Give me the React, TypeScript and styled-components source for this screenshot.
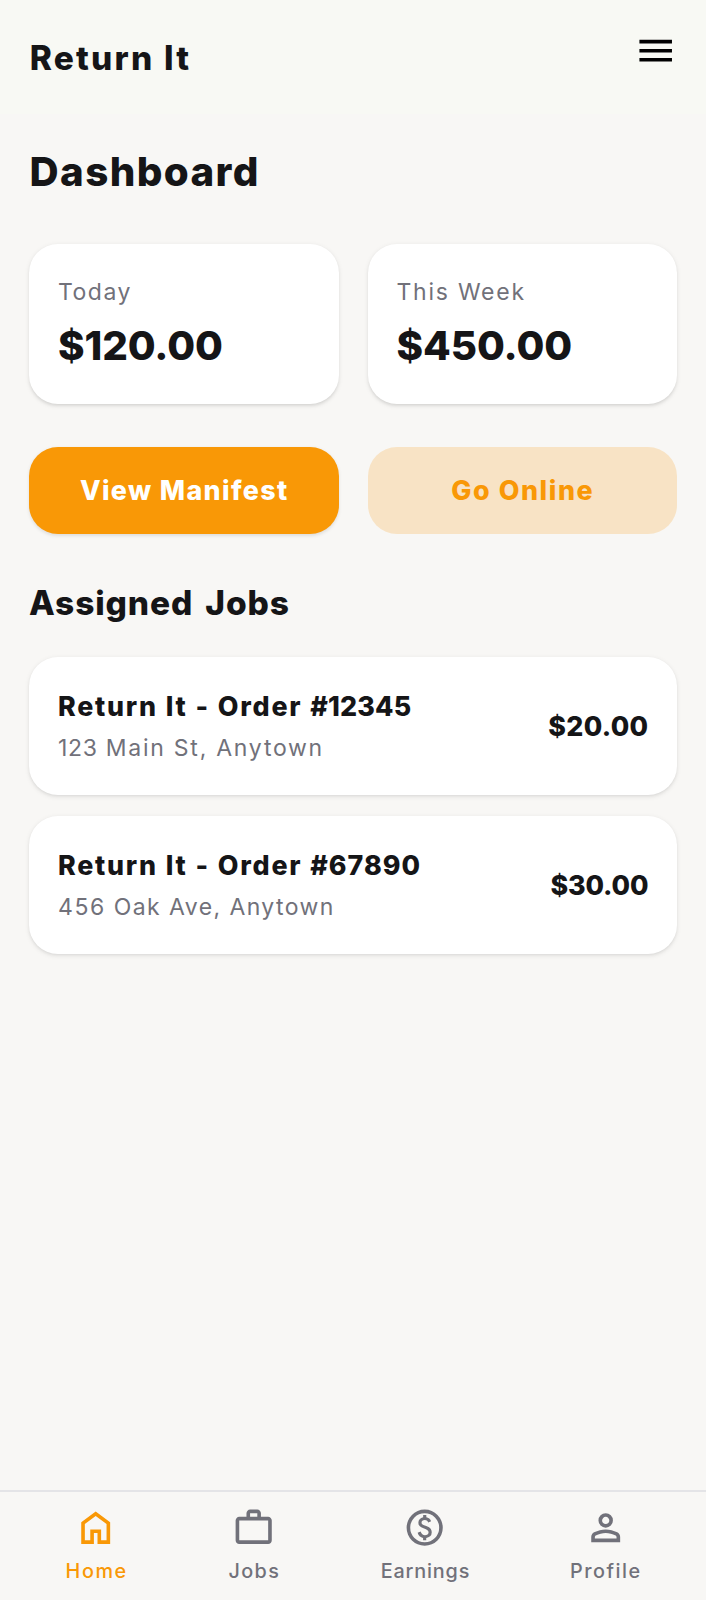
import React from "react";
import styled, { createGlobalStyle } from "styled-components";

const color = {
  page: "#f8f7f5",
  header: "#f8f9f4",
  ink: "#151517",
  muted: "#71717a",
  accent: "#f99806",
  accentSoft: "#f8e3c5",
  line: "#e4e4e7",
};

const GlobalStyle = createGlobalStyle`
  *, *::before, *::after { box-sizing: border-box; }
  body {
    margin: 0;
    background: ${color.page};
    color: ${color.ink};
    font-family: Inter, "Liberation Sans", sans-serif;
  }
  h1, h2, h3, p { margin: 0; }
  button { font: inherit; border: 0; padding: 0; background: none; }
`;

const Screen = styled.div`
  display: flex;
  flex-direction: column;
  width: 706px;
  height: 1600px;
  background: ${color.page};
`;

const Header = styled.header`
  display: flex;
  justify-content: space-between;
  align-items: flex-start;
  height: 114px;
  padding: 29px 29px 0 29.7px;
  background: ${color.header};
`;

const Brand = styled.h1`
  font-size: 33.5px;
  font-weight: 800;
  line-height: 58px;
  letter-spacing: 2.2px;
`;

const MenuButton = styled.button`
  display: flex;
  color: #000;
`;

const Icon = styled.svg`
  display: block;
  width: 43.4px;
  height: 43.4px;
  fill: currentColor;
`;

const Main = styled.main`
  flex: 1;
  padding: 29px 29px 0;
`;

const PageTitle = styled.h2`
  padding-left: 0.5px;
  font-size: 40.3px;
  font-weight: 800;
  line-height: 58px;
  letter-spacing: 1.4px;
`;

const TwoColumns = styled.div`
  display: grid;
  grid-template-columns: 1fr 1fr;
  gap: 29px;
  margin-top: 43px;
`;

const Card = styled.section`
  background: #fff;
  border-radius: 29px;
  box-shadow: 0 1.8px 5.4px rgba(0, 0, 0, 0.08), 0 1.8px 3.6px -1.8px rgba(0, 0, 0, 0.1);
`;

const StatCard = styled(Card)`
  height: 159.5px;
  padding: 29px;
`;

const StatLabel = styled.p<{ $spacing: number }>`
  color: ${color.muted};
  font-size: 23px;
  line-height: 38px;
  letter-spacing: ${(p) => p.$spacing}px;
`;

const StatValue = styled.p<{ $spacing: number }>`
  margin-top: 6px;
  font-size: 40.3px;
  font-weight: 800;
  line-height: 58px;
  letter-spacing: ${(p) => p.$spacing}px;
`;

const ActionButton = styled.button<{ $primary?: boolean }>`
  height: 87px;
  padding-left: 1px;
  border-radius: 29px;
  background: ${(p) => (p.$primary ? color.accent : color.accentSoft)};
  color: ${(p) => (p.$primary ? "#fff" : color.accent)};
  font-size: 26.8px;
  font-weight: 800;
  letter-spacing: ${(p) => (p.$primary ? 1.38 : 1.58)}px;
  box-shadow: ${(p) => (p.$primary ? "0 1.8px 3.6px rgba(0, 0, 0, 0.1)" : "none")};
`;

const SectionTitle = styled.h2`
  margin-top: 43px;
  font-size: 33.5px;
  font-weight: 800;
  line-height: 52px;
  letter-spacing: 0.85px;
  word-spacing: 4px;
`;

const JobList = styled.div`
  display: flex;
  flex-direction: column;
  gap: 21px;
  margin-top: 28px;
`;

const JobCard = styled(Card)`
  display: flex;
  justify-content: space-between;
  align-items: center;
  height: 138px;
  padding: 0 28.5px 0 29px;
`;

const JobTitle = styled.h3`
  font-size: 26.8px;
  font-weight: 800;
  line-height: 44px;
  letter-spacing: 1.75px;
  word-spacing: 0.4px;
`;

const JobAddress = styled.p<{ $spacing: number }>`
  padding-top: 1px;
  color: ${color.muted};
  font-size: 23px;
  line-height: 38px;
  letter-spacing: ${(p) => p.$spacing}px;
`;

const Digits = styled.span<{ $spacing: number }>`
  letter-spacing: ${(p) => p.$spacing}px;
`;

const JobPrice = styled.p<{ $spacing: number }>`
  font-size: 26.8px;
  font-weight: 800;
  line-height: 44px;
  letter-spacing: ${(p) => p.$spacing}px;
`;

const TabBar = styled.nav`
  display: flex;
  justify-content: space-around;
  height: 110.5px;
  padding: 14px 15px 0 15px;
  border-top: 2px solid ${color.line};
`;

const Tab = styled.button<{ $active?: boolean; $width: number; $spacing: number }>`
  display: flex;
  flex-direction: column;
  align-items: center;
  width: ${(p) => p.$width}px;
  color: ${(p) => (p.$active ? color.accent : color.muted)};
  font-size: 19.8px;
  font-weight: 500;
  line-height: 29px;
  letter-spacing: ${(p) => p.$spacing}px;
  white-space: nowrap;
`;

const TabLabel = styled.span`
  margin-top: 8px;
  padding-left: 1px;
`;

const stats = [
  { label: "Today", value: "$120.00", labelSpacing: 1.5, valueSpacing: -0.09 },
  { label: "This Week", value: "$450.00", labelSpacing: 1.75, valueSpacing: -0.04 },
];

const jobs = [
  { id: "#12345", idSpacing: 0.18, number: "123", numberSpacing: 0.66, street: "Main St, Anytown", streetSpacing: 1.75, price: "$20.00", priceSpacing: 0.36 },
  { id: "#67890", idSpacing: 0.98, number: "456", numberSpacing: 1.58, street: "Oak Ave, Anytown", streetSpacing: 1.42, price: "$30.00", priceSpacing: -0.1 },
];

const tabs = [
  {
    label: "Home", width: 62, spacing: 1.58, active: true,
    path: "M240-200h120v-240h240v240h120v-360L480-740 240-560v360Zm-80 80v-480l320-240 320 240v480H520v-240h-80v240H160Z",
  },
  {
    label: "Jobs", width: 52.5, spacing: 1.38,
    path: "M160-120q-33 0-56.5-23.5T80-200v-440q0-33 23.5-56.5T160-720h160v-80q0-33 23.5-56.5T400-880h160q33 0 56.5 23.5T640-800v80h160q33 0 56.5 23.5T880-640v440q0 33-23.5 56.5T800-120H160Zm0-80h640v-440H160v440Zm240-520h160v-80H400v80Z",
  },
  {
    label: "Earnings", width: 89, spacing: 0.85,
    path: "M444-200h70v-50q50-9 86-39t36-89q0-42-24-77t-96-61q-60-20-83-35t-23-41q0-26 18.5-41t53.5-15q32 0 50 15.5t26 38.5l64-26q-11-35-40.5-61T516-710v-50h-70v50q-50 11-78 44t-28 74q0 47 27.5 76t86.5 50q63 23 87.5 41t24.5 47q0 33-23.5 48.5T486-314q-33 0-58.5-20.5T390-396l-66 26q14 48 43.5 77.5T444-252v52Zm36 120q-83 0-156-31.5T197-197q-54-54-85.5-127T80-480q0-83 31.5-156T197-763q54-54 127-85.5T480-880q83 0 156 31.5T763-763q54 54 85.5 127T880-480q0 83-31.5 156T763-197q-54 54-127 85.5T480-80Zm0-80q134 0 227-93t93-227q0-134-93-227t-227-93q-134 0-227 93t-93 227q0 134 93 227t227 93Z",
  },
  {
    label: "Profile", width: 71, spacing: 1.5,
    path: "M480-480q-66 0-113-47t-47-113q0-66 47-113t113-47q66 0 113 47t47 113q0 66-47 113t-113 47ZM160-160v-112q0-34 17.5-62.5T224-378q62-31 126-46.5T480-440q66 0 130 15.5T736-378q29 15 46.5 43.5T800-272v112H160Zm80-80h480v-32q0-11-5.5-20T700-306q-54-27-109-40.5T480-360q-56 0-111 13.5T260-306q-9 5-14.5 14t-5.5 20v32Zm240-320q33 0 56.5-23.5T560-640q0-33-23.5-56.5T480-720q-33 0-56.5 23.5T400-640q0 33 23.5 56.5T480-560Z",
  },
];

export default function App() {
  return (
    <Screen>
      <GlobalStyle />
      <Header>
        <Brand>Return It</Brand>
        <MenuButton aria-label="Menu">
          <Icon viewBox="0 0 24 24">
            <path d="M3 18h18v-2H3v2zm0-5h18v-2H3v2zm0-7v2h18V6H3z" />
          </Icon>
        </MenuButton>
      </Header>
      <Main>
        <PageTitle>Dashboard</PageTitle>
        <TwoColumns>
          {stats.map((s) => (
            <StatCard key={s.label}>
              <StatLabel $spacing={s.labelSpacing}>{s.label}</StatLabel>
              <StatValue $spacing={s.valueSpacing}>{s.value}</StatValue>
            </StatCard>
          ))}
        </TwoColumns>
        <TwoColumns>
          <ActionButton $primary>View Manifest</ActionButton>
          <ActionButton>Go Online</ActionButton>
        </TwoColumns>
        <SectionTitle>Assigned Jobs</SectionTitle>
        <JobList>
          {jobs.map((j) => (
            <JobCard key={j.id}>
              <div>
                <JobTitle>
                  Return It - Order <Digits $spacing={j.idSpacing}>{j.id}</Digits>
                </JobTitle>
                <JobAddress $spacing={j.streetSpacing}>
                  <Digits $spacing={j.numberSpacing}>{j.number}</Digits> {j.street}
                </JobAddress>
              </div>
              <JobPrice $spacing={j.priceSpacing}>{j.price}</JobPrice>
            </JobCard>
          ))}
        </JobList>
      </Main>
      <TabBar>
        {tabs.map((t) => (
          <Tab key={t.label} $active={t.active} $width={t.width} $spacing={t.spacing}>
            <Icon viewBox="0 -960 960 960">
              <path d={t.path} />
            </Icon>
            <TabLabel>{t.label}</TabLabel>
          </Tab>
        ))}
      </TabBar>
    </Screen>
  );
}
